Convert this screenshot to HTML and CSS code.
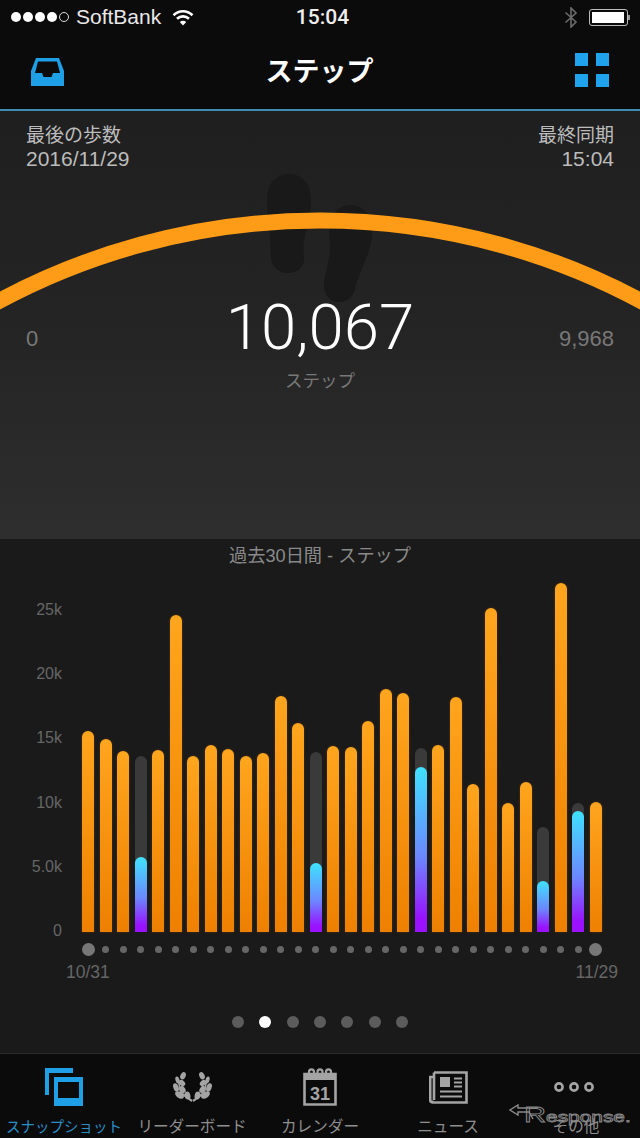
FILE: index.html
```html
<!DOCTYPE html>
<html lang="ja">
<head>
    <meta charset="UTF-8">
    <meta name="viewport" content="width=device-width, initial-scale=1.0">
    <title>ステップ</title>
    <link rel="stylesheet" href="styles.css">
</head>
<body>
    <div class="top-bar">
        <div class="status-bar">
            <div class="status-left">
                <span class="signal"><i></i><i></i><i></i><i></i><i class="empty"></i></span>
                <span class="carrier">SoftBank</span>
                <svg class="wifi" width="22" height="17" viewBox="0 0 22 17">
                    <path d="M1.5 6.2C7 1 15 1 20.5 6.2" />
                    <path d="M5 9.8C8.5 6.6 13.5 6.6 17 9.8" />
                    <path d="M11 16.5L7.8 13C9.6 11.4 12.4 11.4 14.2 13Z" class="wifi-tip" />
                </svg>
            </div>
            <div class="clock">15:04</div>
            <div class="status-right">
                <svg class="bluetooth" width="14" height="21" viewBox="0 0 14 21">
                    <path d="M1.5 5.5L12 15L7 20V1L12 6L1.5 15.5" />
                </svg>
                <span class="battery"><span class="battery-level"></span></span>
            </div>
        </div>
        <div class="nav-bar">
            <svg class="inbox" width="33" height="28" viewBox="0 0 33 28">
                <path class="blue-fill" fill-rule="evenodd" d="M5 0H28L33 13V28H0V13ZM7 3.5L4 15H11L12.5 19H20.5L22 15H29L26 3.5Z" />
            </svg>
            <h1 class="nav-title">ステップ</h1>
            <div class="grid-icon"><i></i><i></i><i></i><i></i></div>
        </div>
    </div>

    <section class="gauge">
        <svg class="gauge-art" width="640" height="428" viewBox="0 0 640 428">
            <path class="foot" d="M289 63C303 63 311 74 311 90C311 106 306 118 304 130C303 138 304 142 304 148C304 157 297 162 288 162C279 162 271 156 271 146L270 125C268 112 267 100 267 88C267 73 276 63 289 63Z" />
            <path class="foot" d="M351 94C364 94 372 105 372 122C372 135 366 148 361 160C358 168 356 172 355 178C353 187 346 191 339 191C330 191 324 184 324 175C324 164 330 150 330 135C329 125 329 118 330 112C332 101 340 94 351 94Z" />
            <path class="arc" d="M-20 200.6A680 680 0 0 1 660 200.6" />
        </svg>
        <div class="gauge-head">
            <div>
                <div>最後の歩数</div>
                <div class="head-num">2016/11/29</div>
            </div>
            <div class="align-right">
                <div>最終同期</div>
                <div class="head-num">15:04</div>
            </div>
        </div>
        <div class="gauge-main">
            <span class="gauge-limit">0</span>
            <div class="gauge-center">
                <div class="gauge-value">10,067</div>
                <div class="gauge-unit">ステップ</div>
            </div>
            <span class="gauge-limit align-right">9,968</span>
        </div>
    </section>

    <section class="chart">
        <h2 class="chart-title">過去30日間 - ステップ</h2>
        <div class="plot">
            <div class="axis">
                <span>25k</span>
                <span>20k</span>
                <span>15k</span>
                <span>10k</span>
                <span>5.0k</span>
                <span>0</span>
            </div>
            <div class="bars">
                <div class="bar" style="height:201px"></div>
                <div class="bar" style="height:193px"></div>
                <div class="bar" style="height:181px"></div>
                <div class="bar missed" style="height:176px"><div class="fill" style="height:75px"></div></div>
                <div class="bar" style="height:182px"></div>
                <div class="bar" style="height:317px"></div>
                <div class="bar" style="height:176px"></div>
                <div class="bar" style="height:187px"></div>
                <div class="bar" style="height:183px"></div>
                <div class="bar" style="height:176px"></div>
                <div class="bar" style="height:179px"></div>
                <div class="bar" style="height:236px"></div>
                <div class="bar" style="height:209px"></div>
                <div class="bar missed" style="height:180px"><div class="fill" style="height:69px"></div></div>
                <div class="bar" style="height:186px"></div>
                <div class="bar" style="height:185px"></div>
                <div class="bar" style="height:211px"></div>
                <div class="bar" style="height:243px"></div>
                <div class="bar" style="height:239px"></div>
                <div class="bar missed" style="height:184px"><div class="fill" style="height:165px"></div></div>
                <div class="bar" style="height:187px"></div>
                <div class="bar" style="height:235px"></div>
                <div class="bar" style="height:148px"></div>
                <div class="bar" style="height:324px"></div>
                <div class="bar" style="height:129px"></div>
                <div class="bar" style="height:150px"></div>
                <div class="bar missed" style="height:105px"><div class="fill" style="height:51px"></div></div>
                <div class="bar" style="height:349px"></div>
                <div class="bar missed" style="height:129px"><div class="fill" style="height:121px"></div></div>
                <div class="bar" style="height:130px"></div>
            </div>
        </div>
        <div class="day-dots">
            <i class="big"></i><i></i><i></i><i></i><i></i><i></i><i></i><i></i><i></i><i></i>
            <i></i><i></i><i></i><i></i><i></i><i></i><i></i><i></i><i></i><i></i>
            <i></i><i></i><i></i><i></i><i></i><i></i><i></i><i></i><i></i><i class="big"></i>
        </div>
        <div class="date-range">
            <span>10/31</span>
            <span>11/29</span>
        </div>
        <div class="pager">
            <i></i><i class="current"></i><i></i><i></i><i></i><i></i><i></i>
        </div>
    </section>

    <nav class="tabs">
        <div class="tab active">
            <div class="tab-icon">
                <svg width="39" height="38" viewBox="0 0 39 38">
                    <path class="blue-fill" d="M0 0H28V5H4V27H0Z" />
                    <path class="blue-fill" fill-rule="evenodd" d="M9 9H38V38H9ZM13 14V30H34V14Z" />
                </svg>
            </div>
            <span>スナップショット</span>
        </div>
        <div class="tab">
            <div class="tab-icon">
                <svg width="39" height="30" viewBox="0 0 39 30">
                    <g id="laurel" class="grey-fill">
                        <ellipse cx="10" cy="3.8" rx="2.6" ry="3.8" transform="rotate(25 10 3.8)" />
                        <ellipse cx="4.5" cy="8" rx="2" ry="3.6" transform="rotate(-15 4.5 8)" />
                        <ellipse cx="9" cy="11" rx="2.6" ry="3.6" transform="rotate(-50 9 11)" />
                        <ellipse cx="3" cy="15.5" rx="2.6" ry="4.4" transform="rotate(-20 3 15.5)" />
                        <ellipse cx="9.5" cy="17.5" rx="2.8" ry="3.8" transform="rotate(-35 9.5 17.5)" />
                        <ellipse cx="6.5" cy="23" rx="3" ry="5" transform="rotate(-55 6.5 23)" />
                        <ellipse cx="14.5" cy="23.5" rx="2.8" ry="4" transform="rotate(-15 14.5 23.5)" />
                        <path d="M6 8L8.5 20L19.5 28L18.5 30L7 21.5L4.5 8Z" />
                    </g>
                    <use href="#laurel" transform="matrix(-1 0 0 1 39 0)" />
                </svg>
            </div>
            <span>リーダーボード</span>
        </div>
        <div class="tab">
            <div class="tab-icon">
                <svg width="34" height="38" viewBox="0 0 34 38">
                    <path class="grey-line" d="M1.5 6H32.5V36.5H1.5Z" />
                    <path class="grey-fill" d="M1 5H33V12H1Z" />
                    <path class="ring" d="M6 8V4C6 0.5 11 0.5 11 4V8" />
                    <path class="ring" d="M14.5 8V4C14.5 0.5 19.5 0.5 19.5 4V8" />
                    <path class="ring" d="M23 8V4C23 0.5 28 0.5 28 4V8" />
                    <text class="cal-day" x="17" y="32" text-anchor="middle">31</text>
                </svg>
            </div>
            <span>カレンダー</span>
        </div>
        <div class="tab">
            <div class="tab-icon">
                <svg width="39" height="33" viewBox="0 0 39 33">
                    <path class="grey-line" d="M5 1.5H37.5V31.5H5C4 31.5 3 30.5 3 29.5" />
                    <path class="grey-line" d="M5 6H1.2V29C1.2 30.5 2.2 31.5 4 31.5" />
                    <path class="grey-line" d="M5 1.5V29" />
                    <rect class="grey-fill" x="11" y="6" width="10" height="10" />
                    <path class="grey-thin" d="M25 7.5H33M25 11.5H33M25 15.5H33M11 20.5H33M11 25.5H33" />
                </svg>
            </div>
            <span>ニュース</span>
        </div>
        <div class="tab">
            <div class="tab-icon">
                <svg class="more-dots" width="40" height="10" viewBox="0 0 40 10">
                    <circle class="grey-line" cx="5" cy="5" r="3.6" />
                    <circle class="grey-line" cx="20" cy="5" r="3.6" />
                    <circle class="grey-line" cx="35" cy="5" r="3.6" />
                </svg>
            </div>
            <span>その他</span>
        </div>
        <div class="watermark">
            <svg width="30" height="16" viewBox="0 0 30 16">
                <path d="M29 4H9V1L1 6L9 11V8H20L24 15" />
            </svg>
            <span class="watermark-text"><b>R</b>esponse.</span>
        </div>
    </nav>
</body>
</html>
```

FILE: styles.css
```css
* {
    box-sizing: border-box;
}
body {
    margin: 0;
    width: 640px;
    height: 1138px;
    overflow: hidden;
    background: #0b0b0b;
    font-family: "Liberation Sans", "Noto Sans CJK JP", sans-serif;
}
i {
    display: block;
}

/* top */
.top-bar {
    height: 111px;
    background: #0b0b0b;
    border-bottom: 2px solid #3d8db4;
}
.status-bar {
    display: grid;
    grid-template-columns: 1fr auto 1fr;
    align-items: center;
    height: 34px;
    padding: 0 10px 0 11px;
    color: #fff;
}
.status-left {
    display: flex;
    align-items: center;
}
.signal {
    display: flex;
    gap: 2px;
}
.signal i {
    width: 10px;
    height: 10px;
    border-radius: 50%;
    background: #fff;
}
.signal i.empty {
    background: none;
    border: 1px solid #ddd;
}
.carrier {
    margin-left: 7px;
    font-size: 21px;
    color: #e8e8e8;
}
.wifi {
    margin-left: 11px;
    fill: none;
    stroke: #fff;
    stroke-width: 2.6;
}
.wifi-tip {
    fill: #fff;
    stroke: none;
}
.clock {
    padding-left: 4px;
    font-family: Roboto, "Liberation Sans", sans-serif;
    font-size: 21px;
    font-weight: 500;
    color: #eee;
}
.status-right {
    display: flex;
    align-items: center;
    justify-content: flex-end;
    gap: 10px;
    padding-right: 2px;
}
.bluetooth {
    margin-right: 1px;
    fill: none;
    stroke: #6c6c6c;
    stroke-width: 1.6;
}
.battery {
    position: relative;
    width: 39px;
    height: 17px;
    padding: 2px;
    border: 1px solid #bbb;
    border-radius: 3px;
}
.battery::after {
    content: "";
    position: absolute;
    left: 38px;
    top: 5px;
    width: 2px;
    height: 5px;
    background: #999;
}
.battery-level {
    display: block;
    width: 32px;
    height: 11px;
    background: #fff;
}
.nav-bar {
    display: flex;
    align-items: center;
    justify-content: space-between;
    height: 75px;
    padding: 0 31px 4px 31px;
}
.inbox {
    margin-top: 4px;
}
.nav-title {
    margin: 0;
    font-size: 27px;
    font-weight: bold;
    color: #fff;
}
.grid-icon {
    display: grid;
    grid-template-columns: 13px 13px;
    gap: 8px;
}
.grid-icon i {
    height: 13px;
    background: #1ea3ec;
}
.blue-fill {
    fill: #1f9fe6;
}

/* gauge */
.gauge {
    position: relative;
    height: 428px;
    padding: 13px 26px 0;
    background: linear-gradient(#1f1f1f, #242424 50%, #2e2e2e);
    color: #bcbcbc;
    font-size: 19px;
    line-height: 23px;
}
.gauge-art {
    position: absolute;
    left: 0;
    top: 0;
}
.foot {
    fill: #191919;
}
.arc {
    fill: none;
    stroke: #ff9c17;
    stroke-width: 16;
}
.gauge-head {
    position: relative;
    display: flex;
    justify-content: space-between;
}
.head-num {
    font-size: 21px;
}
.align-right {
    text-align: right;
}
.gauge-main {
    position: relative;
    display: grid;
    grid-template-columns: 1fr auto 1fr;
    align-items: start;
    margin-top: 123px;
}
.gauge-limit {
    margin-top: 34px;
    font-size: 22px;
    color: #787878;
}
.gauge-center {
    text-align: center;
}
.gauge-value {
    font-family: Roboto, "Liberation Sans", sans-serif;
    font-weight: 300;
    font-size: 63.5px;
    line-height: 70px;
    color: #fff;
}
.gauge-unit {
    margin-top: 7px;
    font-size: 17.5px;
    color: #787878;
}

/* chart */
.chart {
    height: 514px;
    background: #1a1a1a;
    overflow: hidden;
}
.chart-title {
    margin: 5px 0 0;
    font-size: 18.2px;
    line-height: 24px;
    font-weight: normal;
    text-align: center;
    color: #8a8a8a;
}
.plot {
    display: flex;
    align-items: flex-start;
    height: 365px;
    margin-top: 7px;
}
.axis {
    display: flex;
    flex-direction: column;
    justify-content: space-between;
    align-items: flex-end;
    width: 62px;
    height: 339px;
    margin-top: 26px;
    font-size: 16px;
    line-height: 18px;
    color: #666;
}
.bars {
    display: flex;
    align-items: flex-end;
    gap: 5.517px;
    height: 357px;
    margin-left: 20px;
}
.bar {
    position: relative;
    width: 12px;
    border-radius: 6px 6px 0 0;
    background: linear-gradient(#ffa51e, #ee8000);
    box-shadow: 0 0 3px rgba(255, 130, 0, 0.22);
}
.bar.missed {
    background: #3a3a3a;
    box-shadow: none;
}
.fill {
    position: absolute;
    left: 0;
    right: 0;
    bottom: 0;
    border-radius: 6px 6px 0 0;
    background: linear-gradient(#3fe2ff, #6c86ff 55%, #9a10ff 92%);
}
.day-dots {
    display: flex;
    gap: 5.517px;
    height: 14px;
    margin: 2px 0 0 82px;
}
.day-dots i {
    position: relative;
    width: 12px;
}
.day-dots i::before {
    content: "";
    display: block;
    width: 7px;
    height: 7px;
    margin: 3.5px auto 0;
    border-radius: 50%;
    background: #666;
}
.day-dots i.big::before {
    width: 13px;
    height: 13px;
    margin: 0.5px 0 0 -0.5px;
    background: #777;
}
.date-range {
    display: flex;
    justify-content: space-between;
    padding: 0 22px 0 66px;
    margin-top: 6px;
    font-size: 17.5px;
    line-height: 20px;
    color: #666;
}
.pager {
    display: flex;
    justify-content: center;
    gap: 15.3px;
    margin-top: 34px;
}
.pager i {
    width: 12px;
    height: 12px;
    border-radius: 50%;
    background: #5c5c5c;
}
.pager i.current {
    background: #fff;
}

/* tabs */
.tabs {
    position: relative;
    display: grid;
    grid-template-columns: repeat(5, 128px);
    height: 85px;
    background: #0b0b0b;
    border-top: 1px solid #2a2a2a;
    overflow: hidden;
}
.tab {
    display: flex;
    flex-direction: column;
    align-items: center;
    font-size: 15.6px;
    line-height: 20px;
    color: #8f8f8f;
}
.tab-icon {
    display: flex;
    align-items: center;
    justify-content: center;
    height: 52px;
    margin-top: 7px;
    margin-bottom: 4px;
}
.tab.active {
    font-size: 14.5px;
    color: #2a8fc9;
}
.more-dots {
    margin-right: 4px;
}
.grey-fill {
    fill: #a4a4a4;
}
.grey-line {
    fill: none;
    stroke: #a4a4a4;
    stroke-width: 2.6;
}
.grey-thin {
    fill: none;
    stroke: #a4a4a4;
    stroke-width: 1.8;
}
.ring {
    fill: none;
    stroke: #a4a4a4;
    stroke-width: 2.2;
}
.cal-day {
    font-family: "Liberation Sans", sans-serif;
    font-weight: bold;
    font-size: 18px;
    fill: #a4a4a4;
}
.watermark {
    position: absolute;
    left: 509px;
    top: 50px;
    width: 125px;
    height: 28px;
}
.watermark svg {
    position: absolute;
    left: 0;
    top: 0;
    fill: none;
    stroke: #8a8a8a;
    stroke-width: 1.4;
}
.watermark-text {
    position: absolute;
    left: 15px;
    top: -1px;
    font-size: 15px;
    line-height: 24px;
    white-space: nowrap;
    color: transparent;
    -webkit-text-stroke: 0.8px #8a8a8a;
    transform: scaleX(1.39);
    transform-origin: left center;
}
.watermark-text b {
    font-size: 22px;
    font-weight: normal;
}
```
